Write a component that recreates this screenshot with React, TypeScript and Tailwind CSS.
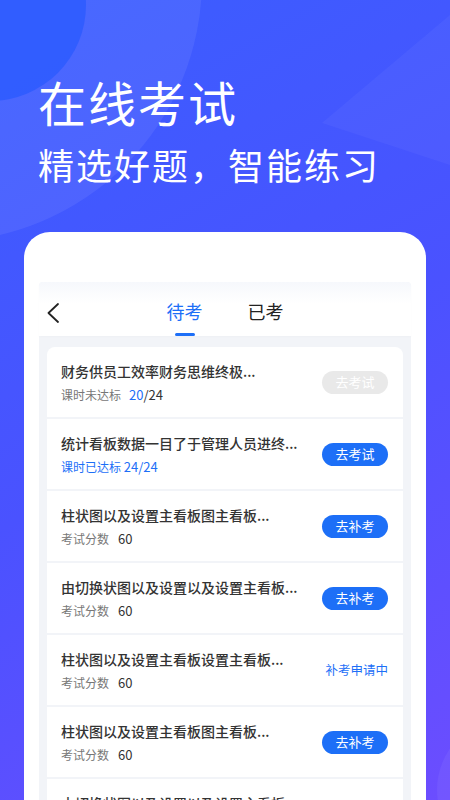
import React from 'react'

type Row = {
  title: string
  kind: 'hours-low' | 'hours-ok' | 'score'
  action: 'disabled' | 'exam' | 'makeup' | 'pending'
}

const rows: Row[] = [
  { title: '财务供员工效率财务思维终极...', kind: 'hours-low', action: 'disabled' },
  { title: '统计看板数据一目了于管理人员进终...', kind: 'hours-ok', action: 'exam' },
  { title: '柱状图以及设置主看板图主看板...', kind: 'score', action: 'makeup' },
  { title: '由切换状图以及设置以及设置主看板...', kind: 'score', action: 'makeup' },
  { title: '柱状图以及设置主看板设置主看板...', kind: 'score', action: 'pending' },
  { title: '柱状图以及设置主看板图主看板...', kind: 'score', action: 'makeup' },
  { title: '由切换状图以及设置以及设置主看板...', kind: 'score', action: 'makeup' },
]

function Sub({ kind }: { kind: Row['kind'] }) {
  if (kind === 'hours-low') {
    return (
      <p className="text-[12px] leading-[18px] text-[#777]">
        课时未达标
        <span className="ml-2 text-[13px] text-[#1d6ff7]">20</span>
        <span className="text-[13px] text-[#333]">/24</span>
      </p>
    )
  }
  if (kind === 'hours-ok') {
    return (
      <p className="text-[12px] leading-[18px] text-[#1d6ff7]">
        课时已达标 <span className="text-[13px]">24/24</span>
      </p>
    )
  }
  return (
    <p className="text-[12px] leading-[18px] text-[#777]">
      考试分数<span className="ml-[9px] text-[13px] text-[#333]">60</span>
    </p>
  )
}

function Action({ action }: { action: Row['action'] }) {
  if (action === 'pending') {
    return <span className="text-[12.5px] text-[#1d6ff7]">补考申请中</span>
  }
  const label = action === 'makeup' ? '去补考' : '去考试'
  const color = action === 'disabled' ? 'bg-[#e9e9e9]' : 'bg-[#1d6ff7]'
  return (
    <span className={`flex h-[23px] w-[66px] items-center justify-center rounded-full text-[13px] text-white ${color}`}>
      {label}
    </span>
  )
}

export default function App() {
  return (
    <div
      className="relative h-[800px] w-[450px] overflow-hidden bg-[linear-gradient(150deg,#3a5eff_0%,#4a52ff_50%,#6c4dff_100%)]"
      style={{ fontFamily: '"Noto Sans CJK SC", "Noto Sans", sans-serif' }}
    >
      {/* background decoration */}
      <svg className="absolute inset-0" width="450" height="800" viewBox="0 0 450 800">
        <circle cx="-60" cy="-20" r="262" fill="#ffffff" fillOpacity="0.07" />
        <circle cx="-10" cy="5" r="96" fill="#2a5aff" fillOpacity="0.75" />
        <polygon points="322,123 450,15 450,165" fill="#ffffff" fillOpacity="0.04" />
        <circle cx="510" cy="790" r="73" fill="#ffffff" fillOpacity="0.05" />
      </svg>

      <div className="relative flex h-full flex-col">
        <div className="pl-[38px] pt-[77px] text-white">
          <h1 className="text-[48px] leading-none tracking-[2px]">在线考试</h1>
          <p className="mt-[21px] text-[36px] leading-none tracking-[2px]">精选好题，智能练习</p>
        </div>

        <div className="mx-6 mt-[50px] flex-1 rounded-t-[26px] bg-white px-[15px] pt-[50px]">
          <div className="h-full rounded-t bg-[#f2f4f8]">
            {/* header */}
            <div className="flex h-[54px] rounded-t bg-[linear-gradient(180deg,#f6f8fc,#ffffff_40%)] px-2 shadow-[0_1px_3px_rgba(0,0,0,0.02)]">
              <div className="w-5 pt-[21px]">
                <svg width="12" height="20" viewBox="0 0 12 20" fill="none">
                  <polyline points="11,1 1.5,10 11,19" stroke="#222" strokeWidth="1.8" strokeLinecap="round" strokeLinejoin="round" />
                </svg>
              </div>
              <div className="flex flex-1 justify-center gap-[45px]">
                <div className="flex flex-col items-center pt-[20px]">
                  <span className="text-[18px] leading-[18px] text-[#1d6ff7]">待考</span>
                  <span className="mt-[13px] h-[3px] w-5 rounded-full bg-[#1d6ff7]" />
                </div>
                <div className="flex flex-col items-center pt-[20px]">
                  <span className="text-[18px] leading-[18px] text-[#222]">已考</span>
                </div>
              </div>
              <div className="w-5" />
            </div>

            {/* list */}
            <div className="flex flex-col gap-[2px] px-2 pt-[11px]">
              {rows.map((r, i) => (
                <div
                  key={i}
                  className={`flex h-[70px] items-center justify-between bg-white pl-[14px] pr-[15px] ${i === 0 ? 'rounded-t-lg' : ''}`}
                >
                  <div className="flex flex-col gap-[5px] self-start pt-[14px]">
                    <p className="text-[14px] font-medium leading-[20px] text-[#333]">{r.title}</p>
                    <Sub kind={r.kind} />
                  </div>
                  <Action action={r.action} />
                </div>
              ))}
            </div>
          </div>
        </div>
      </div>
    </div>
  )
}
